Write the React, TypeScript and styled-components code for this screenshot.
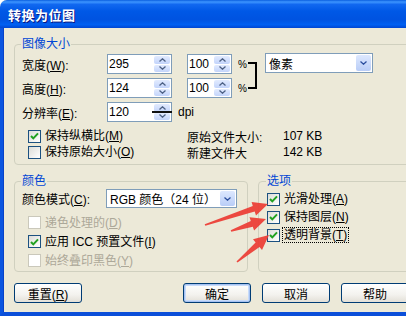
import styled, { createGlobalStyle } from "styled-components";

const GlobalStyle = createGlobalStyle`
  html, body {
    margin: 0;
    padding: 0;
    overflow: hidden;
    background: #ffffff;
  }
  body {
    font-family: "Liberation Sans", "Noto Sans CJK SC", sans-serif;
    font-size: 12px;
    color: #000;
  }
`;

type Pt = [number, number];

const arrowPoints = (tail: Pt, tip: Pt) => {
  const dx = tip[0] - tail[0];
  const dy = tip[1] - tail[1];
  const len = Math.hypot(dx, dy);
  const ux = dx / len;
  const uy = dy / len;
  const nx = -uy;
  const ny = ux;
  const head = 15;
  const hw = 7;
  const t0 = 0.8;
  const t1 = 3;
  const bx = tip[0] - ux * head;
  const by = tip[1] - uy * head;
  const pts: Pt[] = [
    [tail[0] + nx * t0, tail[1] + ny * t0],
    [bx + nx * t1, by + ny * t1],
    [bx + nx * hw, by + ny * hw],
    tip,
    [bx - nx * hw, by - ny * hw],
    [bx - nx * t1, by - ny * t1],
    [tail[0] - nx * t0, tail[1] - ny * t0],
  ];
  return pts.map((p) => p.map((v) => v.toFixed(1)).join(",")).join(" ");
};

const arrows: [Pt, Pt][] = [
  [[205, 225], [268, 204]],
  [[231, 231], [266, 219]],
  [[237, 262], [269, 235]],
];

const Chevron = ({ dir, color = "#4d6185" }: { dir: "up" | "down"; color?: string }) => (
  <svg width="7" height="4" viewBox="0 0 7 4">
    <path
      d={dir === "up" ? "M0.5 3.5 L3.5 0.8 L6.5 3.5" : "M0.5 0.5 L3.5 3.2 L6.5 0.5"}
      fill="none"
      stroke={color}
      strokeWidth="1.3"
    />
  </svg>
);

const CheckMark = () => (
  <svg width="9" height="8" viewBox="0 0 9 8">
    <path d="M1 4 L3.3 6.4 L8 1.4" fill="none" stroke="#21a121" strokeWidth="2" />
  </svg>
);

const SpinInput = ({ value, width, offset = 0, marked = false }: { value: string; width: number; offset?: number; marked?: boolean }) => (
  <SpinBox $width={width} $offset={offset}>
    <SpinValue>{value}</SpinValue>
    <SpinButtons>
      <SpinPart>
        <Chevron dir="up" />
      </SpinPart>
      <SpinPart>
        <Chevron dir="down" />
      </SpinPart>
    </SpinButtons>
    {marked && <PenStroke />}
  </SpinBox>
);

const Select = ({ text, width, height, offset = 0, lift = 0 }: { text: string; width: number; height: number; offset?: number; lift?: number }) => (
  <SelectBox $width={width} $height={height} $offset={offset} $lift={lift}>
    <SelectText>{text}</SelectText>
    <SelectButton>
      <Chevron dir="down" color="#2c4f9e" />
    </SelectButton>
  </SelectBox>
);

const Check = ({ checked = false, disabled = false, focused = false, children }: { checked?: boolean; disabled?: boolean; focused?: boolean; children: React.ReactNode }) => (
  <CheckRow>
    <Box $disabled={disabled}>{checked && <CheckMark />}</Box>
    <CheckLabel $disabled={disabled} $focused={focused}>
      {children}
    </CheckLabel>
  </CheckRow>
);

const App = () => {
  return (
    <Window>
      <GlobalStyle />
      <Frame>
        <TitleBar>转换为位图</TitleBar>
        <Body>
          <Group $top={3} $bottom={4}>
            <Legend>图像大小</Legend>
            <SizeTop>
              <SizeRows>
                <FieldRow>
                  <FieldLabel $width={85}>
                    宽度(<u>W</u>):
                  </FieldLabel>
                  <SpinInput value="295" width={65} />
                  <SpinInput value="100" width={45} offset={15} />
                  <Percent>%</Percent>
                </FieldRow>
                <FieldRow>
                  <FieldLabel $width={85}>
                    高度(<u>H</u>):
                  </FieldLabel>
                  <SpinInput value="124" width={65} />
                  <SpinInput value="100" width={45} offset={15} />
                  <Percent>%</Percent>
                </FieldRow>
              </SizeRows>
              <Bracket />
              <Select text="像素" width={108} height={20} offset={8} lift={1} />
            </SizeTop>
            <FieldRow>
              <FieldLabel $width={85}>
                分辨率(<u>E</u>):
              </FieldLabel>
              <SpinInput value="120" width={65} marked />
              <Unit>dpi</Unit>
            </FieldRow>
            <SizeBottom>
              <CheckColumn $rowHeight={16}>
                <Check checked>
                  保持纵横比(<u>M</u>)
                </Check>
                <Check>
                  保持原始大小(<u>O</u>)
                </Check>
              </CheckColumn>
              <InfoGrid>
                <span>原始文件大小:</span>
                <span>107 KB</span>
                <span>新建文件大</span>
                <span>142 KB</span>
              </InfoGrid>
            </SizeBottom>
          </Group>

          <GroupRow>
            <Group $width={234} $top={1} $bottom={1}>
              <Legend>颜色</Legend>
              <FieldRow $height={19}>
                <FieldLabel $width={84}>
                  颜色模式(<u>C</u>):
                </FieldLabel>
                <Select text="RGB 颜色（24 位）" width={131} height={19} />
              </FieldRow>
              <CheckColumn $rowHeight={19} $top={5}>
                <Check disabled>
                  递色处理的(<u>D</u>)
                </Check>
                <Check checked>
                  应用 ICC 预置文件(<u>I</u>)
                </Check>
                <Check disabled>
                  始终叠印黑色(<u>Y</u>)
                </Check>
              </CheckColumn>
            </Group>
            <Group $grow $inset={8} $top={1} $bottom={1}>
              <Legend>选项</Legend>
              <CheckColumn $rowHeight={18} $top={1} $indent={0}>
                <Check checked>
                  光滑处理(<u>A</u>)
                </Check>
                <Check checked>
                  保持图层(<u>N</u>)
                </Check>
                <Check checked focused>
                  透明背景(<u>T</u>)
                </Check>
              </CheckColumn>
            </Group>
          </GroupRow>

          <ButtonRow>
            <Button>
              重置(<u>R</u>)
            </Button>
            <ButtonGroup>
              <Button $default>确定</Button>
              <Button>取消</Button>
              <Button>帮助</Button>
            </ButtonGroup>
          </ButtonRow>
        </Body>
      </Frame>
      <Annotations width="406" height="316" viewBox="0 0 406 316">
        {arrows.map(([tail, tip], i) => (
          <polygon key={i} points={arrowPoints(tail, tip)} fill="#ec3b33" opacity="0.92" />
        ))}
      </Annotations>
    </Window>
  );
};

const Window = styled.div`
  position: relative;
  width: 406px;
  height: 316px;
  overflow: hidden;
`;

const Frame = styled.div`
  width: 424px;
  height: 316px;
  display: flex;
  flex-direction: column;
  background: #ece9d8;
  border-radius: 7px 7px 0 0;
`;

const TitleBar = styled.div`
  height: 28px;
  flex: none;
  box-sizing: border-box;
  display: flex;
  align-items: center;
  padding-left: 8px;
  border-radius: 7px 7px 0 0;
  background: linear-gradient(
    180deg,
    #0a5fdf 0%,
    #3d95ff 7%,
    #1168f0 16%,
    #0058e6 40%,
    #0053e1 70%,
    #0060f2 88%,
    #0046d2 100%
  );
  color: #fff;
  font-family: "Noto Sans CJK SC", sans-serif;
  font-weight: bold;
  font-size: 13px;
  letter-spacing: 0.5px;
  text-shadow: 1px 1px 0 #0a1883;
`;

const Body = styled.div`
  flex: 1;
  display: flex;
  flex-direction: column;
  padding: 9px 11px 0 11px;
  border-left: 3px solid #0b55e0;
  border-right: 3px solid #0b55e0;
  border-bottom: 4px solid #0b4fd9;
  box-shadow: inset 1px 0 0 #0842c8;
`;

const Group = styled.fieldset<{ $width?: number; $grow?: boolean; $inset?: number; $top: number; $bottom: number }>`
  margin: 0;
  min-width: 0;
  padding: ${({ $top }) => $top}px 8px ${({ $bottom }) => $bottom}px ${({ $inset }) => $inset ?? 7}px;
  border: 1px solid #d0d0bf;
  border-radius: 4px;
  ${({ $width }) => ($width ? `width: ${$width}px; box-sizing: border-box; flex: none;` : "")}
  ${({ $grow }) => ($grow ? "flex: 1;" : "")}
`;

const Legend = styled.legend`
  display: block;
  height: 14px;
  padding: 0 1px;
  margin-left: -1px;
  color: #0046d5;
  line-height: 14px;
  font-size: 12px;
`;

const SizeTop = styled.div`
  display: flex;
  align-items: flex-start;
  margin-bottom: 4px;
`;

const SizeRows = styled.div`
  display: flex;
  flex-direction: column;
  gap: 4px;
`;

const FieldRow = styled.div<{ $height?: number }>`
  display: flex;
  align-items: center;
  height: ${({ $height }) => $height ?? 20}px;
`;

const FieldLabel = styled.span<{ $width: number }>`
  width: ${({ $width }) => $width}px;
  flex: none;
  white-space: nowrap;
`;

const SpinBox = styled.div<{ $width: number; $offset: number }>`
  position: relative;
  width: ${({ $width }) => $width}px;
  height: 20px;
  margin-left: ${({ $offset }) => $offset}px;
  box-sizing: border-box;
  border: 1px solid #7f9db9;
  background: #fff;
  display: flex;
  flex: none;
`;

const SpinValue = styled.span`
  flex: 1;
  padding-left: 1px;
  line-height: 18px;
`;

const SpinButtons = styled.div`
  width: 16px;
  display: flex;
  flex-direction: column;
  padding: 1px;
  gap: 1px;
`;

const SpinPart = styled.div`
  flex: 1;
  border-radius: 2px;
  background: linear-gradient(180deg, #e2ebfe 0%, #c3d4fb 100%);
  display: flex;
  align-items: center;
  justify-content: center;
`;

const PenStroke = styled.div`
  position: absolute;
  right: -1px;
  top: 8px;
  width: 20px;
  height: 2px;
  background: #111;
`;

const Percent = styled.span`
  margin-left: 6px;
  width: 8px;
  font-size: 10px;
`;

const Unit = styled.span`
  margin-left: 6px;
`;

const Bracket = styled.div`
  width: 9px;
  height: 27px;
  margin: 8px 0 0 2px;
  box-sizing: border-box;
  border: 2px solid #000;
  border-left: none;
`;

const SelectBox = styled.div<{ $width: number; $height: number; $offset: number; $lift: number }>`
  width: ${({ $width }) => $width}px;
  height: ${({ $height }) => $height}px;
  margin: ${({ $lift }) => -$lift}px 0 0 ${({ $offset }) => $offset}px;
  box-sizing: border-box;
  border: 1px solid #7f9db9;
  background: #fff;
  display: flex;
  align-items: center;
  flex: none;
`;

const SelectText = styled.span`
  flex: 1;
  padding-left: 3px;
  white-space: nowrap;
`;

const SelectButton = styled.span`
  width: 15px;
  align-self: stretch;
  margin: 1px;
  border-radius: 2px;
  background: linear-gradient(180deg, #dde8fe 0%, #b9cdf7 100%);
  display: flex;
  align-items: center;
  justify-content: center;
`;

const SizeBottom = styled.div`
  display: flex;
  margin-top: 6px;
`;

const CheckColumn = styled.div<{ $rowHeight: number; $top?: number; $indent?: number }>`
  display: grid;
  grid-auto-rows: ${({ $rowHeight }) => $rowHeight}px;
  margin-top: ${({ $top }) => $top ?? 0}px;
  padding-left: ${({ $indent }) => $indent ?? 6}px;
  width: 165px;
  box-sizing: border-box;
`;

const CheckRow = styled.div`
  display: flex;
  align-items: center;
  gap: 3px;
  white-space: nowrap;
  overflow: visible;
`;

const Box = styled.span<{ $disabled: boolean }>`
  width: 13px;
  height: 13px;
  flex: none;
  box-sizing: border-box;
  border: 1px solid ${({ $disabled }) => ($disabled ? "#cac8bb" : "#1c5180")};
  background: ${({ $disabled }) => ($disabled ? "#fff" : "linear-gradient(135deg, #dcdcd7 0%, #fff 100%)")};
  display: flex;
  align-items: center;
  justify-content: center;
`;

const CheckLabel = styled.span<{ $disabled: boolean; $focused: boolean }>`
  color: ${({ $disabled }) => ($disabled ? "#aca899" : "#000")};
  padding: 0 1px;
  line-height: 14px;
  outline: ${({ $focused }) => ($focused ? "1px dotted #000" : "none")};
`;

const InfoGrid = styled.div`
  display: grid;
  grid-template-columns: 96px auto;
  grid-auto-rows: 16px;
  align-items: center;
  white-space: nowrap;
`;

const GroupRow = styled.div`
  display: flex;
  gap: 10px;
  margin-top: 9px;
`;

const ButtonRow = styled.div`
  display: flex;
  margin-top: 11px;
`;

const ButtonGroup = styled.div`
  display: flex;
  gap: 11px;
  margin-left: 101px;
`;

const Button = styled.button<{ $default?: boolean }>`
  width: 68px;
  height: 20px;
  padding: 0;
  box-sizing: border-box;
  border: 1px solid #003c74;
  border-radius: 3px;
  background: linear-gradient(180deg, #ffffff 0%, #f3f2ee 60%, #e3e0d7 100%);
  font-family: "Liberation Sans", "Noto Sans CJK SC", sans-serif;
  font-size: 12px;
  color: #000;
  box-shadow: ${({ $default }) => ($default ? "inset 0 0 0 1px #a6c2f2, inset 0 0 0 2px #c7dbfa" : "none")};
`;

const Annotations = styled.svg`
  position: absolute;
  left: 0;
  top: 0;
  pointer-events: none;
`;

export default App;
